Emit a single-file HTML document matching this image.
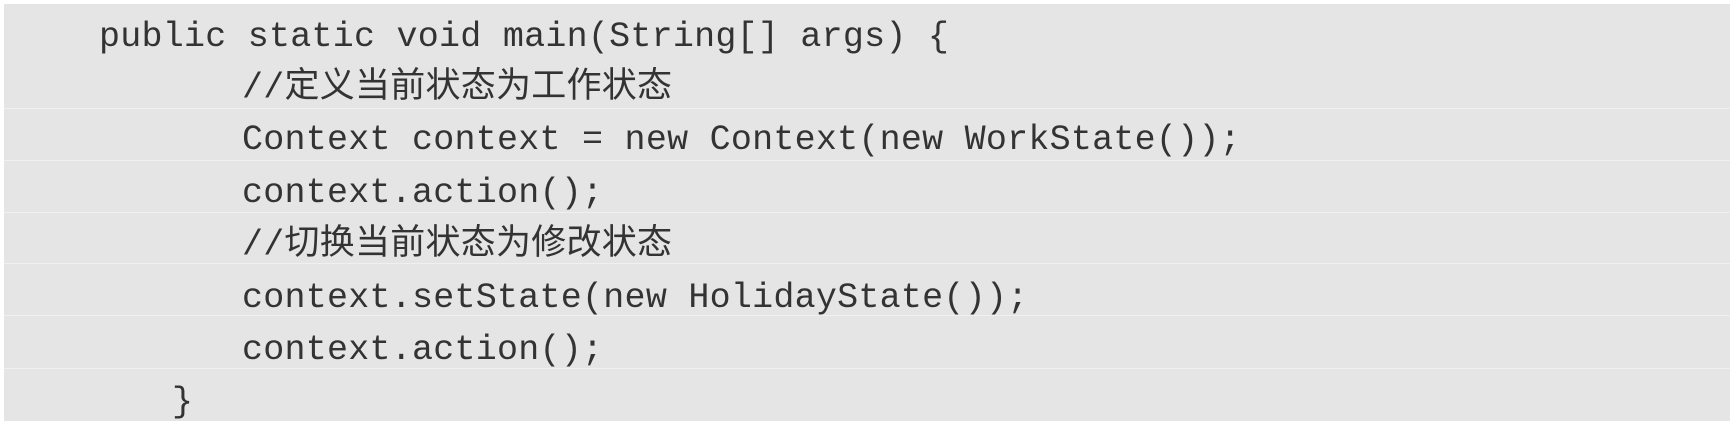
<!DOCTYPE html>
<html><head><meta charset="utf-8"><style>
body{margin:0;width:1734px;height:429px;background:#fff;position:relative;overflow:hidden}
.box{position:absolute;left:4px;top:4px;width:1726px;height:417px;background:#e5e5e5}
.sep{position:absolute;left:4px;width:1726px;height:1px;background:#f0f0f0}
.l{position:absolute;font-family:"Liberation Mono","Noto Sans CJK SC",monospace;font-size:35px;line-height:52px;color:#333;white-space:pre;letter-spacing:0.25px}
</style></head><body>
<div class="box"></div>
<div class="sep" style="top:108px"></div>
<div class="sep" style="top:160px"></div>
<div class="sep" style="top:212px"></div>
<div class="sep" style="top:263px"></div>
<div class="sep" style="top:315px"></div>
<div class="sep" style="top:368px"></div>
<div class="l" style="left:99px;top:11px">public static void main(String[] args) {</div>
<div class="l" style="left:242px;top:62px">//定义当前状态为工作状态</div>
<div class="l" style="left:242px;top:114px">Context context = new Context(new WorkState());</div>
<div class="l" style="left:242px;top:167px">context.action();</div>
<div class="l" style="left:242px;top:219px">//切换当前状态为修改状态</div>
<div class="l" style="left:242px;top:272px">context.setState(new HolidayState());</div>
<div class="l" style="left:242px;top:324px">context.action();</div>
<div class="l" style="left:172px;top:376px">}</div>
</body></html>
